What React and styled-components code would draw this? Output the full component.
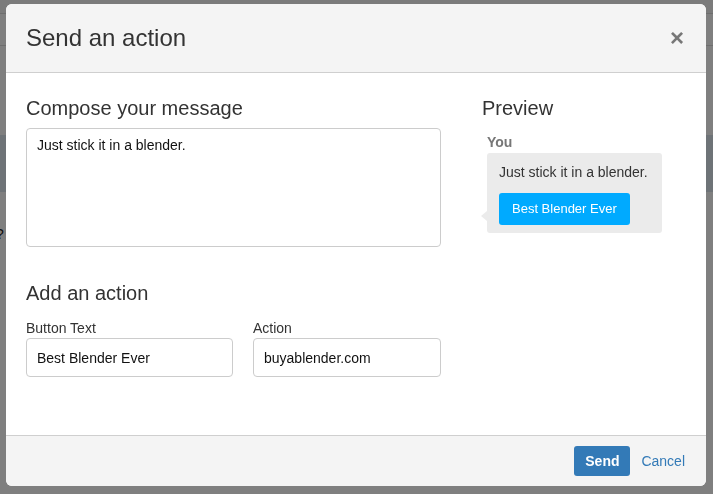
import React from 'react';
import styled, { createGlobalStyle } from 'styled-components';

const GlobalStyle = createGlobalStyle`
  html, body {
    margin: 0;
    padding: 0;
    background: #fff;
    font-family: "Liberation Sans", Arial, sans-serif;
    color: #333;
  }
  * { box-sizing: border-box; }
`;

// page that sits behind the backdrop
const Page = styled.div`
  height: 494px;
  overflow: hidden;
`;

const TopStrip = styled.div`
  height: 14px;
  background: #f6f6f6;
  border-bottom: 1px solid #dcdcdc;
`;

const NavBar = styled.div`
  height: 32px;
  border-bottom: 1px solid #dcdcdc;
`;

const Band = styled.div`
  margin-top: 89px;
  height: 57px;
  background: #dde6ef;
`;

const Stray = styled.p`
  margin: 34px 0 0 -4px;
  font-size: 14px;
  color: #222;
`;

const Backdrop = styled.div`
  position: fixed;
  inset: 0;
  background: rgba(0, 0, 0, 0.5);
  display: flex;
  justify-content: flex-start;
  align-items: flex-start;
  padding: 4px 0 0 6px;
`;

const Modal = styled.div`
  width: 700px;
  background: #fff;
  border-radius: 6px;
  overflow: hidden;
  display: flex;
  flex-direction: column;
`;

const Header = styled.div`
  height: 69px;
  background: #f4f4f4;
  border-bottom: 1px solid #cfcfcf;
  display: flex;
  align-items: center;
  justify-content: space-between;
  padding: 0 22px 0 20px;
`;

const Title = styled.h1`
  margin: 0;
  font-size: 24px;
  font-weight: normal;
  color: #333;
`;

const Close = styled.button`
  border: 0;
  background: none;
  padding: 0;
  font-family: "Liberation Sans", Arial, sans-serif;
  font-size: 24px;
  font-weight: bold;
  line-height: 1;
  color: #777;
  cursor: pointer;
`;

const Body = styled.div`
  height: 362px;
  padding: 24px 20px 0 20px;
  display: grid;
  grid-template-columns: 415px 1fr;
  column-gap: 41px;
`;

const Column = styled.div`
  display: flex;
  flex-direction: column;
`;

const SectionTitle = styled.h2`
  margin: ${p => p.$top || 0}px 0 ${p => p.$gap || 9}px;
  font-size: 20px;
  line-height: 22px;
  font-weight: normal;
  color: #333;
`;

const TextArea = styled.textarea`
  width: 415px;
  height: 119px;
  margin: 0;
  padding: 7px 10px;
  border: 1px solid #ccc;
  border-radius: 4px;
  resize: none;
  font-family: "Liberation Sans", Arial, sans-serif;
  font-size: 14px;
  line-height: 18px;
  color: #111;
  outline: none;
`;

const FieldRow = styled.div`
  display: grid;
  grid-template-columns: 207px 188px;
  column-gap: 20px;
`;

const Field = styled.label`
  display: flex;
  flex-direction: column;
`;

const Label = styled.span`
  font-size: 14px;
  line-height: 16px;
  margin-bottom: 2px;
  color: #333;
`;

const Input = styled.input`
  height: 39px;
  margin: 0;
  padding: 0 10px;
  border: 1px solid #ccc;
  border-radius: 4px;
  font-family: "Liberation Sans", Arial, sans-serif;
  font-size: 14px;
  color: #111;
  outline: none;
`;

const Sender = styled.div`
  margin: 0 0 3px 5px;
  font-size: 14px;
  line-height: 16px;
  font-weight: bold;
  color: #777;
`;

const Bubble = styled.div`
  position: relative;
  align-self: flex-start;
  margin-left: 5px;
  padding: 11px 14px 8px 12px;
  background: #ebebeb;
  border-radius: 3px;

  &::before {
    content: '';
    position: absolute;
    left: -6px;
    bottom: 12px;
    border-style: solid;
    border-width: 5px 6px 5px 0;
    border-color: transparent #ebebeb transparent transparent;
  }
`;

const BubbleText = styled.div`
  font-size: 14px;
  line-height: 16px;
  color: #333;
`;

const ActionButton = styled.div`
  display: inline-block;
  margin-top: 13px;
  height: 32px;
  line-height: 32px;
  padding: 0 13px;
  background: #00aaff;
  border-radius: 3px;
  color: #fff;
  font-size: 13px;
`;

const Footer = styled.div`
  height: 51px;
  background: #f4f4f4;
  border-top: 1px solid #cfcfcf;
  display: flex;
  align-items: center;
  justify-content: flex-end;
  gap: 11px;
  padding: 0 21px 0 20px;
`;

const SendButton = styled.button`
  height: 30px;
  width: 56px;
  border: 0;
  border-radius: 3px;
  background: #337ab7;
  color: #fff;
  font-family: "Liberation Sans", Arial, sans-serif;
  font-size: 14px;
  font-weight: bold;
  cursor: pointer;
`;

const CancelLink = styled.a`
  font-size: 14px;
  color: #337ab7;
  text-decoration: none;
  cursor: pointer;
`;

const App = () => {
  return (
    <>
      <GlobalStyle />
      <Page>
        <TopStrip />
        <NavBar />
        <Band />
        <Stray>?</Stray>
      </Page>
      <Backdrop>
        <Modal>
          <Header>
            <Title>Send an action</Title>
            <Close aria-label="Close">×</Close>
          </Header>
          <Body>
            <Column>
              <SectionTitle>Compose your message</SectionTitle>
              <TextArea defaultValue="Just stick it in a blender." />
              <SectionTitle as="h3" $top={35} $gap={16}>
                Add an action
              </SectionTitle>
              <FieldRow>
                <Field>
                  <Label>Button Text</Label>
                  <Input defaultValue="Best Blender Ever" />
                </Field>
                <Field>
                  <Label>Action</Label>
                  <Input defaultValue="buyablender.com" />
                </Field>
              </FieldRow>
            </Column>
            <Column>
              <SectionTitle $gap={15}>Preview</SectionTitle>
              <Sender>You</Sender>
              <Bubble>
                <BubbleText>Just stick it in a blender.</BubbleText>
                <ActionButton>Best Blender Ever</ActionButton>
              </Bubble>
            </Column>
          </Body>
          <Footer>
            <SendButton>Send</SendButton>
            <CancelLink>Cancel</CancelLink>
          </Footer>
        </Modal>
      </Backdrop>
    </>
  );
};

export default App;
